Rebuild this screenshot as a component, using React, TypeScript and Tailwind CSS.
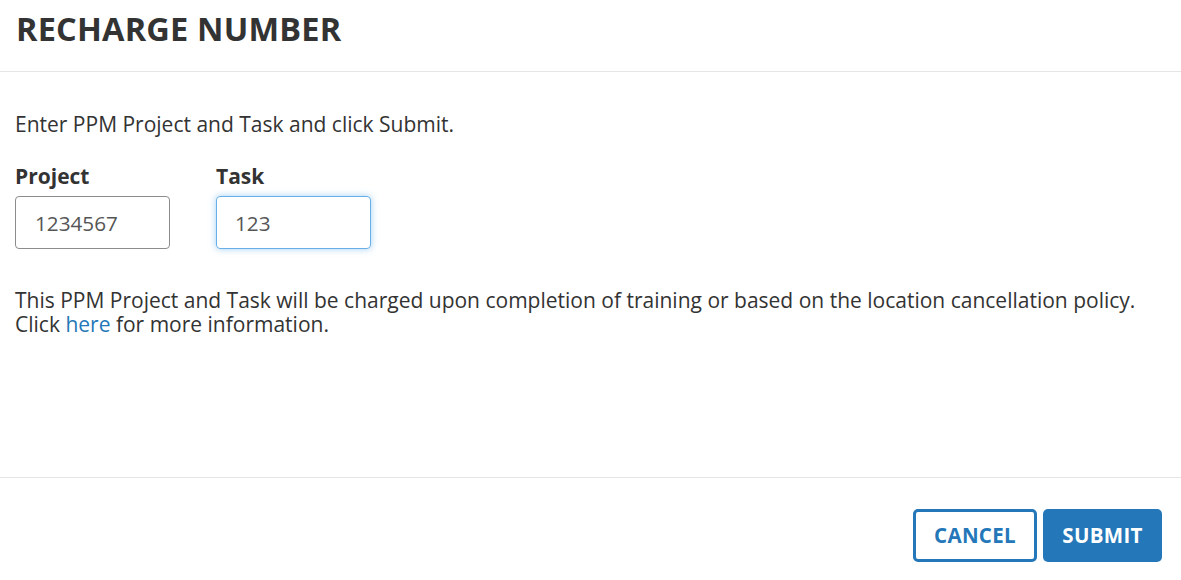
export default function App() {
  return (
    <div className="w-[1181px] h-[580px] bg-white text-[#333] font-['Open_Sans',sans-serif] flex flex-col">
      {/* Header */}
      <div className="h-[72px] border-b border-[#e5e5e5] px-4 pb-3 flex items-center">
        <h1 className="text-[32.5px] font-bold leading-none tracking-[0.2px]">RECHARGE NUMBER</h1>
      </div>

      {/* Body */}
      <div className="flex-1 px-[15px] pt-[40px]">
        <p className="text-[21px] leading-[24px]">Enter PPM Project and Task and click Submit.</p>

        <div className="flex gap-[46px] mt-[28px]">
          <label className="flex flex-col">
            <span className="text-[21px] font-bold leading-[24px] mb-[8px]">Project</span>
            <input
              defaultValue="1234567"
              className="w-[155px] h-[53px] border border-[#8c8c8c] rounded-[4px] px-[19px] text-[20.7px] text-[#555] outline-none"
            />
          </label>
          <label className="flex flex-col">
            <span className="text-[21px] font-bold leading-[24px] mb-[8px]">Task</span>
            <input
              defaultValue="123"
              className="w-[155px] h-[53px] border border-[#66afe9] rounded-[4px] px-[18px] text-[20.7px] text-[#555] outline-none shadow-[0_0_7px_rgba(102,175,233,0.6)]"
            />
          </label>
        </div>

        <p className="text-[21px] leading-[24px] mt-[39px]">
          This PPM Project and Task will be charged upon completion of training or based on the location cancellation policy.
          <br />
          Click <a href="#" className="text-[#2477b8]">here</a> for more information.
        </p>
      </div>

      {/* Footer */}
      <div className="h-[103px] border-t border-[#e5e5e5] flex justify-end items-start gap-[6px] pt-[31px] pr-[19px]">
        <button className="w-[124px] h-[53px] border-[3px] border-[#2477b8] rounded-[5px] text-[#2477b8] text-[20.5px] font-bold tracking-[0.3px]">
          CANCEL
        </button>
        <button className="w-[119px] h-[53px] bg-[#2477b8] rounded-[5px] text-white text-[20.5px] font-bold tracking-[0.3px]">
          SUBMIT
        </button>
      </div>
    </div>
  );
}
